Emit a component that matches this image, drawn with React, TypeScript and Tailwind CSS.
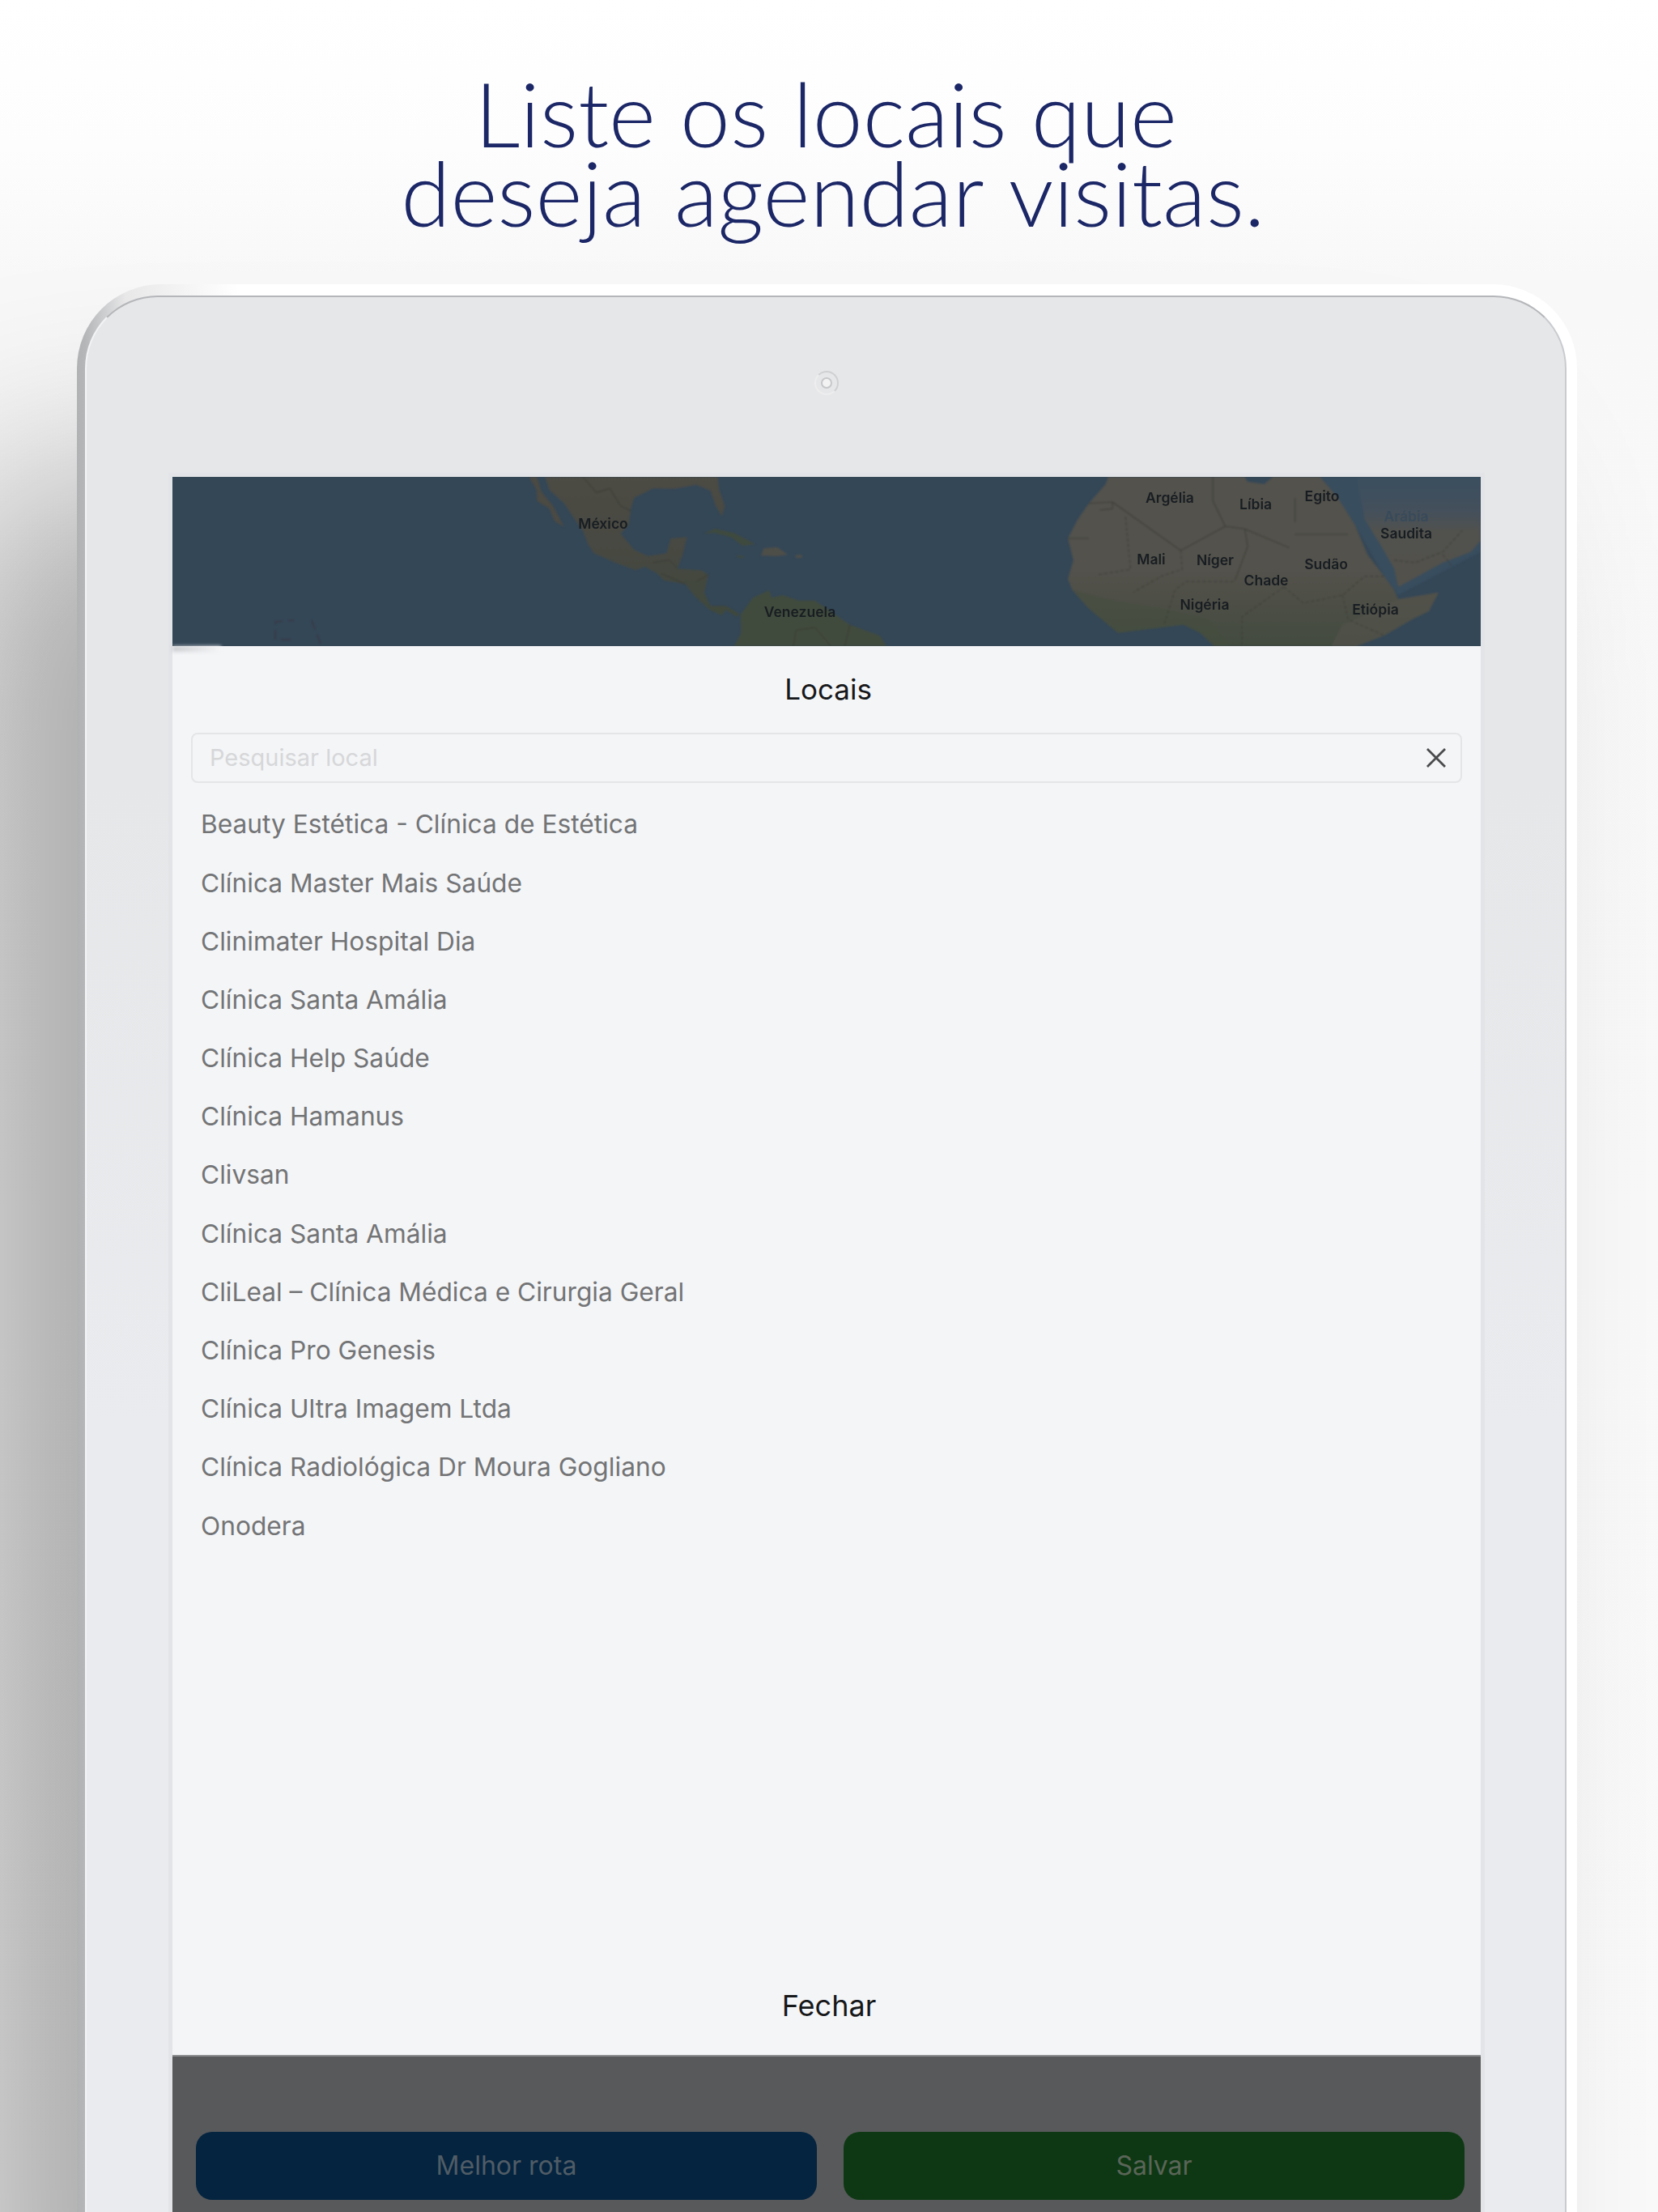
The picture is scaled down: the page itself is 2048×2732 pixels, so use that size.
import React from 'react';

const places = [
    'Beauty Estética - Clínica de Estética',
    'Clínica Master Mais Saúde',
    'Clinimater Hospital Dia',
    'Clínica Santa Amália',
    'Clínica Help Saúde',
    'Clínica Hamanus',
    'Clivsan',
    'Clínica Santa Amália',
    'CliLeal – Clínica Médica e Cirurgia Geral',
    'Clínica Pro Genesis',
    'Clínica Ultra Imagem Ltda',
    'Clínica Radiológica Dr Moura Gogliano',
    'Onodera',
];

const labels = [
    { t: 'México', x: 532, y: 64 },
    { t: 'Venezuela', x: 775, y: 173 },
    { t: 'Argélia', x: 1232, y: 32 },
    { t: 'Líbia', x: 1338, y: 40 },
    { t: 'Egito', x: 1420, y: 30 },
    { t: 'Saudita', x: 1524, y: 76 },
    { t: 'Mali', x: 1209, y: 108 },
    { t: 'Níger', x: 1288, y: 109 },
    { t: 'Chade', x: 1351, y: 134 },
    { t: 'Sudão', x: 1425, y: 114 },
    { t: 'Nigéria', x: 1275, y: 164 },
    { t: 'Etiópia', x: 1486, y: 170 },
];

const MapStrip: React.FC = () => (
    <svg viewBox="0 0 1616 209" className="block h-[209px] w-full bg-[#344757]">
        <defs>
            <linearGradient id="africa" x1="0" y1="0" x2="0" y2="1">
                <stop offset="0" stopColor="#53524c" />
                <stop offset="0.55" stopColor="#53524c" />
                <stop offset="0.72" stopColor="#4e4f47" />
                <stop offset="1" stopColor="#434b3f" />
            </linearGradient>
            <linearGradient id="arabia" x1="0" y1="0" x2="0" y2="1">
                <stop offset="0" stopColor="#3a4f60" />
                <stop offset="0.3" stopColor="#44505c" />
                <stop offset="0.5" stopColor="#51524e" />
                <stop offset="1" stopColor="#53514b" />
            </linearGradient>
            <linearGradient id="mexico" x1="0" y1="0" x2="0" y2="1">
                <stop offset="0" stopColor="#4c4b44" />
                <stop offset="0.5" stopColor="#484942" />
                <stop offset="1" stopColor="#3f483c" />
            </linearGradient>
        </defs>
        <g className="blur-[0.8px]">
            {/* Americas, traced in the 3x crop's coordinates */}
            <g transform="translate(407,-4) scale(0.3333)">
                <path
                    fill="url(#mexico)"
                    d="M160 12L520 12L800 12L805 60L826 120L815 158L792 120L772 62L720 42L640 56L560 55L490 90L478 130L470 190L440 222L490 282L540 305L610 295L625 240L686 235L670 300L650 352L740 358L765 375L750 440L772 490L830 490L880 520L870 530L830 505L815 525L770 505L715 455L680 410L600 395L575 370L530 345L495 358L420 330L340 295L318 260L300 212L270 170L230 110L175 60Z"
                />
                <path fill="#4b4a43" d="M100 12L130 12L146 66L190 120L230 197L195 176L176 130L130 102L128 60Z" />
                <path fill="#3f4a3e" d="M745 222L790 204L860 220L940 262L892 268L850 236L790 220Z" />
                <path fill="#4e4e48" d="M970 276L1020 272L1060 300L1020 306L960 304Z" />
                <path fill="#3f4a3e" d="M868 302L898 306L895 313L875 311Z" />
                <path fill="#4e4e48" d="M1086 302L1112 300L1112 312L1090 313Z" />
                <path
                    fill="#414b3d"
                    d="M860 640L886 590L884 522L930 460L990 432L1000 460L1040 450L1100 470L1160 470L1290 560L1400 600L1426 640Z"
                />
                <path
                    fill="none"
                    stroke="#383a34"
                    strokeWidth="3"
                    d="M300 12L350 70L400 55L440 120L478 138M560 330L620 320L650 350M590 370L680 410M720 400L765 375M1080 640L1090 580L1160 570L1220 640M1290 560L1270 640"
                />
            </g>
            {/* Africa and Arabia */}
            <g transform="translate(1087,-4) scale(0.3444,0.3333)">
                <path fill="#384d5e" d="M960 12L1535 12L1535 290L1240 450L1190 380L1085 190L1000 60Z" />
                <path fill="url(#arabia)" d="M1090 12L1535 12L1535 250L1500 290L1400 330L1240 420L1225 350L1180 270L1120 170Z" />
                <path
                    fill="url(#africa)"
                    d="M200 12L690 12L700 30L760 38L790 12L960 12L1000 60L1030 100L1085 190L1130 300L1190 380L1225 430L1240 465L1385 440L1350 510L1290 540L1190 600L1090 640L580 640L530 590L470 560L350 575L235 590L130 500L70 430L55 390L75 320L55 240L90 170L130 110L190 40Z"
                />
                <path fill="#444d3e" fillOpacity="0.5" d="M70 430L220 470L400 500L560 540L640 640L580 640L530 590L470 560L350 575L235 590L130 500Z" />
                <path fill="#53524c" fillOpacity="0.7" d="M1040 560L1240 465L1385 440L1350 510L1290 540L1190 600L1090 640L1000 640Z" />
                <path
                    fill="none"
                    stroke="#3e3e38"
                    strokeWidth="3"
                    d="M215 105L460 285L620 195L690 205L850 275M620 195L575 100L575 12M870 225L1060 225M870 180L870 90M55 240L130 240M130 110L215 105L215 130L170 135M690 205L700 270L655 395"
                />
                <path
                    fill="none"
                    stroke="#3e3e38"
                    strokeWidth="3"
                    strokeDasharray="12 8"
                    d="M262 160L280 355L160 375M460 285L465 355L390 380L290 440M650 400L480 400L440 430L400 560M830 420L900 480L1040 450L1120 380L1190 380M830 420L680 530L680 640M1040 450L1060 540L1190 600M1225 320L1300 330L1400 290L1470 210M1400 300L1430 340"
                />
            </g>
            <path fill="none" stroke="#3a3742" strokeWidth="1.5" strokeDasharray="12 7" d="M127 201L127 179L150 177M134 201L147 201M172 177L184 209" />
        </g>
        <g fontFamily="Inter, sans-serif" fontSize="17.5" fontWeight="600" fill="#181d22" textAnchor="middle" className="blur-[0.5px]">
            {labels.map((l) => (
                <text key={l.t} x={l.x} y={l.y}>
                    {l.t}
                </text>
            ))}
            <text x="1524" y="55" fill="#384a5a">
                Arábia
            </text>
        </g>
    </svg>
);

const App: React.FC = () => {
    return (
        <div className="h-[2732px] w-[2048px] overflow-hidden bg-[linear-gradient(180deg,#ffffff_0,#fefdfe_180px,#f9f8f9_340px,#fafafa_100%)] font-['Inter',sans-serif]">
            <h1 className="pt-[90px] text-center font-['Lato',sans-serif] text-[111px] leading-[98px] font-light text-[#1b2766]">
                <span className="block pr-[8px]">Liste os locais que</span>
                <span className="block pl-[10px] [word-spacing:5px]">deseja agendar visitas.</span>
            </h1>

            {/* tablet body, cut off by the bottom of the page */}
            <div className="mt-[65px] ml-[95px] w-[1853px] rounded-t-[104px] bg-[linear-gradient(90deg,#b0b2b4_0,#b4b6b8_10px,#e8e8e9_60px,#ffffff_200px)] pt-[14px] pr-[13px] pl-[10px] shadow-[-155px_240px_300px_rgba(0,0,0,0.31)]">
                <div className="h-[2400px] rounded-t-[90px] border-t-2 border-r-2 border-l-2 border-t-[#b4b6b9] border-r-[#c9cbce] border-l-[#f3f4f5] bg-[linear-gradient(180deg,#e6e7e9_0,#e6e7e9_600px,#e9ebee_1400px)] pt-[91px] pr-[99px] pl-[101px]">
                    <div className="flex h-[30px] justify-center">
                        <div className="flex h-[30px] w-[30px] items-center justify-center rounded-full border-2 border-t-[#cfd0d2] border-r-[#cfd0d2] border-b-[#eeeeef] border-l-[#eeeeef]">
                            <div className="h-[14px] w-[14px] rounded-full border-2 border-[#c6c7c9] bg-[#f3f3f4]" />
                        </div>
                    </div>

                    <div className="mt-[96px] border-x-[5px] border-t-[5px] border-[#e2e4e7]">
                        <MapStrip />
                        <div className="relative flex h-[1740px] flex-col bg-[#f4f5f7]">
                            <div className="absolute top-0 left-0 h-[7px] w-[60px] bg-[linear-gradient(90deg,#c9cbce,#f4f5f7)] blur-[2px]" />
                            <div className="flex h-[107px] items-center justify-center pl-[4px] text-[35px] text-[#17181a]">Locais</div>

                            <div className="mx-[23px] flex h-[62px] items-center justify-between rounded-[8px] border-2 border-[#e4e5e7] pr-[18px] pl-[21px]">
                                <span className="text-[29px] text-[#d6d7d9]">Pesquisar local</span>
                                <svg width="24" height="24" viewBox="0 0 24 24" className="text-[#4a4b4d]">
                                    <path d="M1 1L23 23M23 1L1 23" stroke="currentColor" strokeWidth="2.8" fill="none" />
                                </svg>
                            </div>

                            <ul className="mt-[15px] pl-[35px]">
                                {places.map((place, i) => (
                                    <li key={i} className="flex h-[72.2px] items-center text-[31.7px] text-[#737476]">
                                        {place}
                                    </li>
                                ))}
                            </ul>

                            <div className="mt-auto flex h-[122px] items-center justify-center pl-[6px] text-[36px] text-[#17181a]">Fechar</div>
                        </div>
                        <div className="flex h-[300px] gap-[33px] border-t-2 border-[#8d8e90] bg-[#58595b] pt-[93px] pr-[20px] pl-[29px]">
                            <div className="flex h-[84px] flex-1 items-center justify-center rounded-[20px] bg-[#04243f] text-[32px] text-[#505c66]">
                                Melhor rota
                            </div>
                            <div className="flex h-[84px] flex-1 items-center justify-center rounded-[20px] bg-[#0e3813] text-[32px] text-[#5a6558]">
                                Salvar
                            </div>
                        </div>
                    </div>
                </div>
            </div>
        </div>
    );
};

export default App;
